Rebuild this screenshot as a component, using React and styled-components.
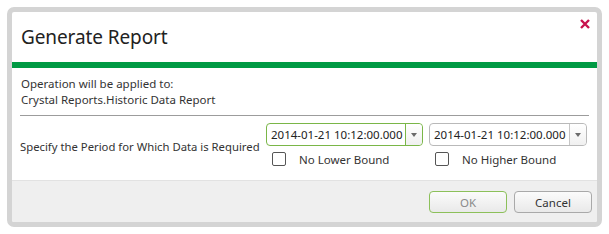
import React from 'react'
import styled, { createGlobalStyle } from 'styled-components'

const GlobalStyle = createGlobalStyle`
  html, body {
    margin: 0;
    padding: 0;
    background: #fff;
  }
  body {
    font-family: "Noto Sans", "Open Sans", sans-serif;
    color: #333;
  }
`

const Page = styled.div`
  padding: 7px;
`

const Dialog = styled.div`
  position: relative;
  width: 585px;
  height: 210px;
  border: 5px solid #d4d4d4;
  border-radius: 7px;
  background: #fff;
  display: flex;
  flex-direction: column;
  overflow: hidden;
`

const Header = styled.div`
  height: 50px;
  display: flex;
  align-items: center;
  padding-left: 9px;
`

const Title = styled.h1`
  margin: 0;
  font-size: 19px;
  font-weight: 400;
  color: #222;
  letter-spacing: -0.1px;
`

const Close = styled.button`
  position: absolute;
  top: 5px;
  right: 5px;
  width: 14px;
  height: 14px;
  padding: 0;
  border: none;
  background: none;
  cursor: pointer;
`

const Accent = styled.div`
  height: 6px;
  background: #009a44;
`

const Body = styled.div`
  padding: 8px 8px 0 8px;
`

const Info = styled.div`
  padding-left: 1px;
  font-size: 11.5px;
  line-height: 16px;
  color: #333;
  padding-bottom: 7px;
  border-bottom: 1px solid #9c9c9c;
`

const Row = styled.div`
  height: 64px;
  box-sizing: border-box;
  padding-top: 7px;
  display: flex;
  align-items: flex-start;
  gap: 6px;
`

const Label = styled.div`
  flex: 0 0 240px;
  font-size: 11.3px;
  line-height: 16px;
  color: #333;
  padding-top: 16px;
  white-space: nowrap;
`

const Field = styled.div`
  flex: 0 0 ${p => p.$width}px;
  display: flex;
  flex-direction: column;
  gap: 5px;
`

const Picker = styled.div`
  height: 21px;
  display: flex;
  border: 1px solid ${p => (p.$focused ? '#7ab648' : '#b9b9b9')};
  border-radius: 4px;
  background: #fff;
`

const PickerText = styled.div`
  flex: 1;
  min-width: 0;
  padding-left: 4px;
  font-size: 11.5px;
  line-height: 21px;
  color: #222;
  white-space: nowrap;
  overflow: hidden;
`

const PickerButton = styled.div`
  flex: 0 0 16px;
  border-left: 1px solid ${p => (p.$focused ? '#7ab648' : '#c6c6c6')};
  display: flex;
  align-items: center;
  justify-content: center;
  background: linear-gradient(#ffffff, #f0f0f0);
  border-radius: 0 4px 4px 0;
`

const Arrow = styled.span`
  width: 0;
  height: 0;
  border-left: 3px solid transparent;
  border-right: 3px solid transparent;
  border-top: 4px solid #6b6b6b;
`

const Check = styled.label`
  display: flex;
  align-items: center;
  height: 16px;
  padding-left: 6px;
  font-size: 11.5px;
  color: #333;
  gap: 13px;
`

const Box = styled.span`
  width: 12px;
  height: 12px;
  border: 1px solid #555;
  border-radius: 2px;
  background: #fff;
`

const Footer = styled.div`
  flex: 1;
  background: #efefef;
  border-top: 1px solid #e2e2e2;
  display: flex;
  justify-content: flex-end;
  align-items: flex-start;
  gap: 7px;
  padding: 10px 5px 0 0;
`

const Button = styled.button`
  width: 78px;
  height: 22px;
  border: 1px solid ${p => (p.$primary ? '#8cc05a' : '#a9a9a9')};
  border-radius: 4px;
  background: linear-gradient(#fbfbfb, #e9e9e9);
  font-family: inherit;
  font-size: 11.5px;
  color: ${p => (p.$primary ? '#8a8a8a' : '#333')};
  padding: 0;
`

const DatePicker = ({ value, focused }) => (
  <Picker $focused={focused}>
    <PickerText>{value}</PickerText>
    <PickerButton $focused={focused}><Arrow /></PickerButton>
  </Picker>
)

const App = () => (
  <Page>
    <GlobalStyle />
    <Dialog>
      <Header>
        <Title>Generate Report</Title>
        <Close aria-label="Close">
          <svg width="14" height="14" viewBox="0 0 14 14">
            <path d="M3 3 L11 11 M11 3 L3 11" stroke="#c8124d" strokeWidth="2.4" />
          </svg>
        </Close>
      </Header>
      <Accent />
      <Body>
        <Info>
          Operation will be applied to:<br />
          Crystal Reports.Historic Data Report
        </Info>
        <Row>
          <Label>Specify the Period for Which Data is Required</Label>
          <Field $width={157}>
            <DatePicker value="2014-01-21 10:12:00.000" focused />
            <Check><Box />No Lower Bound</Check>
          </Field>
          <Field $width={158}>
            <DatePicker value="2014-01-21 10:12:00.000" />
            <Check><Box />No Higher Bound</Check>
          </Field>
        </Row>
      </Body>
      <Footer>
        <Button $primary>OK</Button>
        <Button>Cancel</Button>
      </Footer>
    </Dialog>
  </Page>
)

export default App
